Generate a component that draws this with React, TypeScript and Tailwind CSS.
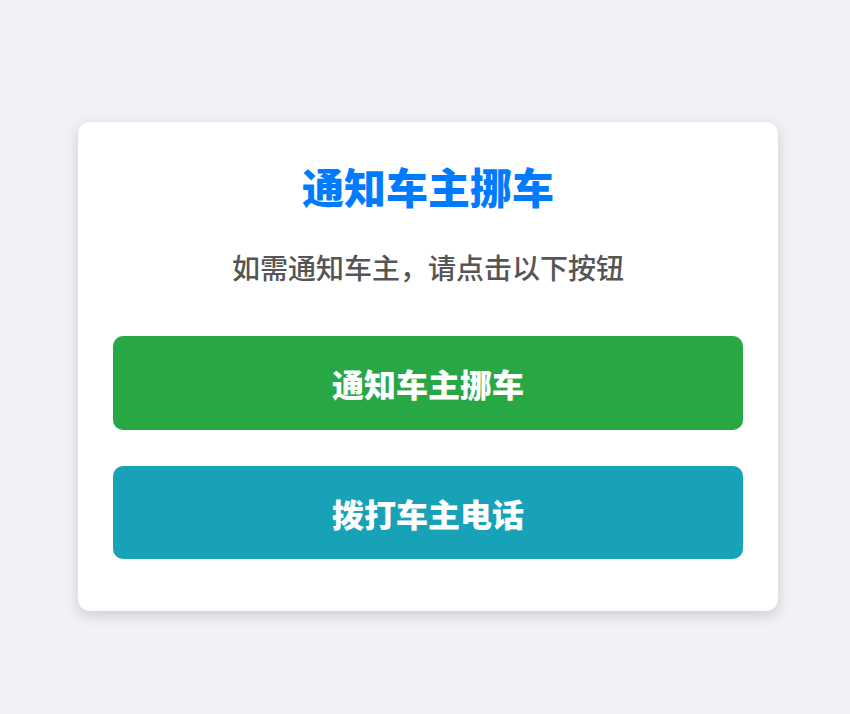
export default function App() {
  return (
    <div className="min-h-[714px] w-full bg-[#f0f2f5] pt-[122px] pl-[78px]" style={{ fontFamily: '"Noto Sans CJK SC", "Noto Sans", sans-serif' }}>
      <div className="w-[700px] h-[489px] bg-white rounded-[12px] shadow-[0_4px_14px_rgba(0,0,0,0.16)] px-[35px] pt-[39px] flex flex-col">
        <h1 className="text-center text-[42px] leading-[50px] font-black text-[#007bff]">通知车主挪车</h1>
        <p className="mt-[39px] text-center text-[28px] leading-[34px] font-medium text-[#555555]">如需通知车主，请点击以下按钮</p>
        <div className="mt-[52px] flex flex-col gap-[36px]">
          <button className="h-[94px] w-full rounded-[10px] bg-[#28a745] text-white text-[32px] font-black">通知车主挪车</button>
          <button className="h-[93px] w-full rounded-[10px] bg-[#17a2b8] text-white text-[32px] font-black">拨打车主电话</button>
        </div>
      </div>
    </div>
  );
}
